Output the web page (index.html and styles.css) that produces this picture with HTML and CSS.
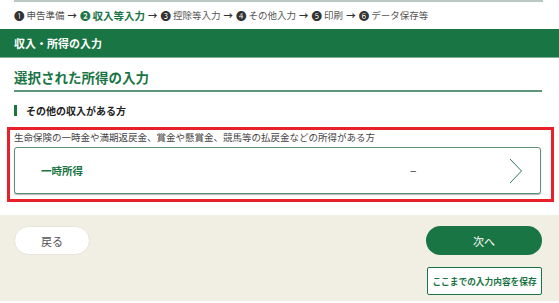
FILE: index.html
```html
<!DOCTYPE html>
<html lang="ja">
<head>
  <meta charset="UTF-8" />
  <title>収入・所得の入力</title>
  <link rel="stylesheet" href="styles.css">
</head>
<body>
  <div class="topline"></div>
  <div class="steps">
    <span class="num">❶</span><span>申告準備</span><span class="arrow">→</span>
    <span class="num current">❷</span><span class="current">収入等入力</span><span class="arrow">→</span>
    <span class="num">❸</span><span>控除等入力</span><span class="arrow">→</span>
    <span class="num">❹</span><span>その他入力</span><span class="arrow">→</span>
    <span class="num">❺</span><span>印刷</span><span class="arrow">→</span>
    <span class="num">❻</span><span>データ保存等</span>
  </div>

  <div class="title-bar">収入・所得の入力</div>

  <div class="main">
    <h2>選択された所得の入力</h2>
    <h3>その他の収入がある方</h3>

    <div class="highlight">
      <p class="desc">生命保険の一時金や満期返戻金、賞金や懸賞金、競馬等の払戻金などの所得がある方</p>
      <div class="card">
        <span class="card-label">一時所得</span>
        <span class="card-value">–</span>
        <svg class="chevron" width="14" height="26" viewBox="0 0 14 26">
          <polyline points="1,1 12.5,13 1,25" fill="none" stroke="#2f7a55" stroke-width="1" />
        </svg>
      </div>
    </div>
  </div>

  <div class="footer">
    <button class="btn-back">戻る</button>
    <div class="right">
      <button class="btn-next">次へ</button>
      <button class="btn-save">ここまでの入力内容を保存</button>
    </div>
  </div>
</body>
</html>
```

FILE: styles.css
```css
body {
  margin: 0;
  font-family: "Noto Sans CJK JP", sans-serif;
  color: #333;
  background: #fff;
}
.topline {
  height: 2px;
  margin: 0 16px 0 14px;
  background: #b7c9c0;
}
.steps {
  display: flex;
  align-items: center;
  height: 26px;
  padding-left: 14px;
  font-size: 9.5px;
  color: #555;
  white-space: nowrap;
}
.steps .num {
  font-size: 10.5px;
  color: #333;
  margin-right: 2px;
}
.steps .arrow {
  font-weight: bold;
  color: #333;
  margin: 0 3px;
}
.steps .current {
  color: #1a7545;
  font-weight: bold;
  font-size: 10.5px;
}
.title-bar {
  height: 28px;
  line-height: 28px;
  margin-top: 1px;
  padding-left: 14px;
  background: #1a7545;
  border-bottom: 1px solid #7fae95;
  color: #fff;
  font-size: 11px;
  font-weight: bold;
}
.main {
  padding: 0 17px 0 14px;
}
h2 {
  margin: 0;
  padding-top: 10px;
  padding-bottom: 4px;
  font-size: 13.5px;
  line-height: 18px;
  color: #1a7545;
  border-bottom: 2px solid #5d967a;
}
h3 {
  margin: 13px 0 0;
  padding-left: 9px;
  border-left: 3px solid #1a7545;
  font-size: 10px;
  line-height: 11px;
  color: #222;
}
.highlight {
  margin: 11px -12px 0 -7px;
  padding: 0 10px 5px 4px;
  border: 3px solid #e8202a;
}
.desc {
  margin: 0;
  padding-top: 1px;
  font-size: 9.5px;
  line-height: 12px;
  color: #444;
  white-space: nowrap;
}
.card {
  display: flex;
  align-items: center;
  height: 45px;
  margin-top: 4px;
  border: 1px solid #5e8f77;
  border-radius: 3px;
  box-shadow: 0 1px 1px rgba(0,0,0,0.3);
  background: #fff;
}
.card-label {
  width: 369px;
  padding-left: 26px;
  font-size: 10.5px;
  font-weight: bold;
  color: #1a7545;
}
.card-value {
  font-size: 12px;
  line-height: 12px;
  color: #333;
  padding-bottom: 2px;
}
.chevron {
  margin-left: auto;
  margin-right: 17px;
}
.footer {
  display: flex;
  justify-content: space-between;
  align-items: flex-start;
  height: 75px;
  margin-top: 13px;
  padding: 11px 17px 0 14px;
  background: #f1eee4;
}
button {
  font-family: inherit;
  cursor: pointer;
}
.btn-back {
  width: 76px;
  height: 29px;
  border: 1px solid #e8e4d8;
  border-radius: 15px;
  background: #fff;
  color: #555;
  font-size: 11px;
}
.right {
  display: flex;
  flex-direction: column;
  align-items: flex-end;
  gap: 12px;
}
.btn-next {
  width: 116px;
  height: 29px;
  border: none;
  border-radius: 15px;
  background: #1a7545;
  color: #fff;
  font-size: 11px;
}
.btn-save {
  width: 115px;
  height: 28px;
  padding: 0;
  border: 1px solid #1a7545;
  border-radius: 2px;
  background: #fff;
  color: #1a7545;
  font-size: 8.7px;
  font-weight: bold;
}
```
